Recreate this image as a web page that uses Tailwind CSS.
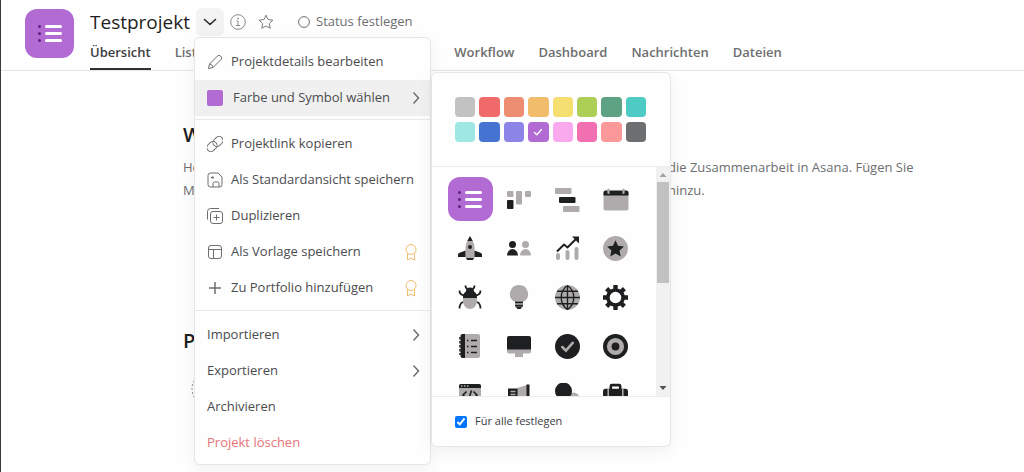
<!DOCTYPE html>
<html lang="de">

<head>
    <meta charset="utf-8" />
    <meta name="viewport" content="width=device-width, initial-scale=1.0">
    <title>Testprojekt</title>
    <script src="https://cdn.jsdelivr.net/npm/@tailwindcss/browser@4"></script>
</head>

<body class="relative min-h-screen overflow-hidden border-l border-[#3a3a3a] bg-[#fefefe] font-['Open_Sans',sans-serif] text-[#6d6e6f]">

    <!-- Header -->
    <header class="flex gap-4 border-b border-[#e6e6e6] pl-6">
        <div class="mt-[9px] flex size-[49px] shrink-0 items-center justify-center rounded-xl bg-[#b36bd4]">
            <svg class="size-6" viewBox="0 0 24 24">
                <g fill="#5c2380"><circle cx="1.5" cy="4.500" r="1.5" /><circle cx="1.5" cy="11.500" r="1.5" /><circle cx="1.5" cy="18.500" r="1.5" /></g>
                <path d="M8.500 4.500h14M8.500 11.500h14M8.500 18.500h14" stroke="#fff" stroke-width="3" stroke-linecap="round" />
            </svg>
        </div>
        <div class="min-w-0 flex-1">
            <div class="flex h-11 items-center">
                <h1 class="w-[106px] whitespace-nowrap text-[19px] font-medium text-[#1e1f21]">Testprojekt</h1>
                <button class="flex size-7 items-center justify-center rounded-md bg-[#f3f3f3]" aria-label="Projektaktionen">
                    <svg class="size-4" viewBox="0 0 16 16" fill="none" stroke="#2a2b2c" stroke-width="1.6" stroke-linecap="round" stroke-linejoin="round"><path d="M2.500 5.500 8 10.500l5.500-5" /></svg>
                </button>
                <button class="ml-1.5" aria-label="Projektdetails">
                    <svg class="size-4" viewBox="0 0 16 16" fill="none" stroke="#8a8b8c"><circle cx="8" cy="8" r="7.300" /><path d="M6.500 7H8v4.500M6 11.500h4" /><circle cx="8" cy="4.500" r=".5" fill="#6d6e6f" /></svg>
                </button>
                <button class="ml-3" aria-label="Favorit">
                    <svg class="size-4" viewBox="0 0 16 16" fill="none" stroke="#7a7b7c" stroke-linejoin="round"><path d="m8 1.200 2 4.400 4.900.6-3.600 3.300.9 4.800L8 12l-4.200 2.300.9-4.800L1.100 6.200l4.900-.6z" /></svg>
                </button>
                <button class="ml-6 flex items-center gap-1.5 whitespace-nowrap text-[13px]">
                    <svg class="size-3" viewBox="0 0 12 12" fill="none" stroke="#6d6e6f"><circle cx="6" cy="6" r="5.400" /></svg>
                    Status festlegen
                </button>
            </div>
            <nav class="flex h-[26px] gap-6 whitespace-nowrap text-[13px] leading-4 font-semibold">
                <a href="#" class="border-b-2 border-[#2f3032] text-[#3c3d3f]">Übersicht</a>
                <a href="#">Liste</a>
                <a href="#">Board</a>
                <a href="#">Zeitachse</a>
                <a href="#">Kalender</a>
                <a href="#">Workflow</a>
                <a href="#">Dashboard</a>
                <a href="#">Nachrichten</a>
                <a href="#">Dateien</a>
            </nav>
        </div>
    </header>

    <!-- Page content -->
    <main class="pt-[50px] pl-[182px]">
        <h2 class="text-xl leading-7 font-semibold text-[#1e1f21]">Wir</h2>
        <div class="mt-[7px] grid grid-cols-[485px_1fr] text-[13px] leading-[23px]">
            <span>Heißen Sie</span>
            <span>die Zusammenarbeit in Asana. Fügen Sie</span>
            <span>Material</span>
            <span>hinzu.</span>
        </div>
        <h2 class="mt-[125px] text-xl leading-7 font-semibold text-[#1e1f21]">Plan</h2>
        <svg class="mt-4 ml-2 size-9" viewBox="0 0 36 36" fill="none" stroke="#8a8b8c" stroke-dasharray="2 2"><circle cx="18" cy="18" r="17" /></svg>
    </main>

    <!-- Project actions menu -->
    <div class="absolute top-[37px] left-[193px] w-[237px] rounded-md border border-[#e6e6e6] bg-[#fefefe] text-[13px] text-[#4b4c4e] shadow-[0_4px_16px_rgba(0,0,0,0.06)]">
        <div class="pt-1.5 pb-[3px]">
            <button class="flex h-9 w-full items-center gap-2 px-3">
                <svg class="size-4" viewBox="0 0 16 16" fill="none" stroke="#6d6e6f" stroke-linejoin="round"><path d="m1.500 14.500 1-4.500 8-8a2 2 0 0 1 3 0l.5.500a2 2 0 0 1 0 3l-8 8z" /><path d="M2.500 10c2 .3 3.200 1.500 3.500 3.500" /></svg>
                Projektdetails bearbeiten
            </button>
            <button class="flex h-9 w-full items-center gap-2.5 bg-[#f0f0f0] px-3">
                <span class="size-4 rounded-xs bg-[#b36bd4]"></span>
                Farbe und Symbol wählen
                <svg class="-mr-1.5 ml-auto size-4" viewBox="0 0 16 16" fill="none" stroke="#6d6e6f" stroke-width="1.500"><path d="m5.500 2.500 5 5.500-5 5.500" /></svg>
            </button>
        </div>
        <div class="border-t border-[#e8e8e8] pt-1.5 pb-1">
            <button class="flex h-9 w-full items-center gap-2 px-3">
                <svg class="size-4" viewBox="0 0 16 16" fill="none" stroke="#6d6e6f"><rect x="-.5" y="6.500" width="11" height="8" rx="4" transform="rotate(-45 5 10.500)" /><rect x="5.500" y="1.500" width="11" height="8" rx="4" transform="rotate(-45 11 5.500)" /></svg>
                Projektlink kopieren
            </button>
            <button class="flex h-9 w-full items-center gap-2 px-3">
                <svg class="size-4" viewBox="0 0 16 16" fill="none" stroke="#6d6e6f"><path d="M3.500 1H11l4 4v7.500a2.500 2.500 0 0 1-2.500 2.500h-9A2.500 2.500 0 0 1 1 12.500v-9A2.500 2.500 0 0 1 3.500 1zM6 15v-3.500A1.500 1.500 0 0 1 7.500 10h3a1.500 1.500 0 0 1 1.500 1.500V15" /><path d="M4.500 5h2v1h-2z" fill="#6d6e6f" /></svg>
                <span class="whitespace-nowrap">Als Standardansicht speichern</span>
            </button>
            <button class="flex h-9 w-full items-center gap-2 px-3">
                <svg class="size-4" viewBox="0 0 16 16" fill="none" stroke="#6d6e6f"><rect x="3.500" y="3.500" width="12" height="12" rx="2.500" /><path d="M9.500 6.500v6M6.500 9.500h6M.5 11.500V3.500a3 3 0 0 1 3-3h8.500" /></svg>
                Duplizieren
            </button>
            <button class="flex h-9 w-full items-center gap-2 px-3">
                <svg class="size-4" viewBox="0 0 16 16" fill="none" stroke="#6d6e6f"><rect x="1.500" y="1.500" width="13" height="13" rx="2.500" /><path d="M1.500 5.500h13M6.500 5.500v9" /></svg>
                Als Vorlage speichern
                <svg class="-mr-px ml-auto h-[17px] w-4" viewBox="0 0 16 17" fill="none" stroke="#f1bd6c"><circle cx="8" cy="5.500" r="5" /><path d="M4.500 9.500v6.500L8 14l3.500 2V9.500" /></svg>
            </button>
            <button class="flex h-9 w-full items-center gap-2 px-3">
                <svg class="size-4" viewBox="0 0 16 16" fill="none" stroke="#6d6e6f" stroke-width="1.500"><path d="M8 2v12M2 8h12" /></svg>
                Zu Portfolio hinzufügen
                <svg class="-mr-px ml-auto h-[17px] w-4" viewBox="0 0 16 17" fill="none" stroke="#f1bd6c"><circle cx="8" cy="5.500" r="5" /><path d="M4.500 9.500v6.500L8 14l3.500 2V9.500" /></svg>
            </button>
        </div>
        <div class="border-t border-[#e8e8e8] pt-1.5 pb-[3px]">
            <button class="flex h-9 w-full items-center px-3">
                Importieren
                <svg class="-mr-1.5 ml-auto size-4" viewBox="0 0 16 16" fill="none" stroke="#6d6e6f" stroke-width="1.500"><path d="m5.500 2.500 5 5.500-5 5.500" /></svg>
            </button>
            <button class="flex h-9 w-full items-center px-3">
                Exportieren
                <svg class="-mr-1.5 ml-auto size-4" viewBox="0 0 16 16" fill="none" stroke="#6d6e6f" stroke-width="1.500"><path d="m5.500 2.500 5 5.500-5 5.500" /></svg>
            </button>
            <button class="flex h-9 w-full items-center px-3">Archivieren</button>
            <button class="flex h-9 w-full items-center px-3 text-[#e8747a]">Projekt löschen</button>
        </div>
    </div>

    <!-- Colour and icon picker -->
    <div class="absolute top-[72px] left-[430px] w-[240px] rounded-md border border-[#e6e6e6] bg-[#fefefe] shadow-[0_4px_16px_rgba(0,0,0,0.06)]">
        <div class="grid grid-cols-8 gap-x-1 gap-y-[5px] py-6 pr-6 pl-[23px]">
            <button aria-label="Grau" class="h-5 rounded bg-[#c3c2c2]"></button>
            <button aria-label="Rot" class="h-5 rounded bg-[#f06a6a]"></button>
            <button aria-label="Orange" class="h-5 rounded bg-[#ec8d71]"></button>
            <button aria-label="Gelborange" class="h-5 rounded bg-[#f1bd6c]"></button>
            <button aria-label="Gelb" class="h-5 rounded bg-[#f5df70]"></button>
            <button aria-label="Gelbgrün" class="h-5 rounded bg-[#aecf55]"></button>
            <button aria-label="Grün" class="h-5 rounded bg-[#5da283]"></button>
            <button aria-label="Blaugrün" class="h-5 rounded bg-[#4ecbc4]"></button>
            <button aria-label="Aqua" class="h-5 rounded bg-[#9ee7e3]"></button>
            <button aria-label="Blau" class="h-5 rounded bg-[#4573d2]"></button>
            <button aria-label="Indigo" class="h-5 rounded bg-[#8d84e8]"></button>
            <button aria-label="Lila" class="flex h-5 items-center justify-center rounded bg-[#b36bd4]">
                <svg class="size-2.5" viewBox="0 0 10 10" fill="none" stroke="#fff" stroke-width="1.300" stroke-linecap="round" stroke-linejoin="round"><path d="M1.500 5.500 3.800 7.800 8.500 2.500" /></svg>
            </button>
            <button aria-label="Magenta" class="h-5 rounded bg-[#f9aaef]"></button>
            <button aria-label="Pink" class="h-5 rounded bg-[#f26fb2]"></button>
            <button aria-label="Hellrot" class="h-5 rounded bg-[#fc979a]"></button>
            <button aria-label="Dunkelgrau" class="h-5 rounded bg-[#6d6e6f]"></button>
        </div>

        <div class="flex h-[231px] overflow-hidden border-y border-[#ececec]">
            <div class="grid flex-1 auto-rows-[44px] grid-cols-4 gap-x-1 gap-y-[5px] pt-2.5 pr-[18px] pl-4 *:flex *:items-center *:justify-center">
                <button class="rounded-xl bg-[#b36bd4]" aria-label="Liste">
                    <svg class="size-6" viewBox="0 0 24 24">
                        <g fill="#5c2380"><circle cx="1.500" cy="5.500" r="1.500" /><circle cx="1.500" cy="12.500" r="1.500" /><circle cx="1.500" cy="19.500" r="1.500" /></g>
                        <path d="M8.500 5.500h14M8.500 12.500h14M8.500 19.500h14" stroke="#fff" stroke-width="3" stroke-linecap="round" />
                    </svg>
                </button>
                <button aria-label="Board">
                    <svg class="size-6" viewBox="0 0 24 24" fill="#afabac"><rect y="4" width="6.500" height="6" rx="1" /><rect y="13" width="6.500" height="9" rx="1" fill="#1e1f21" /><rect x="9" y="4" width="6" height="13.500" rx="1" /><rect x="18" y="4" width="6" height="6" rx="1" /></svg>
                </button>
                <button aria-label="Zeitachse">
                    <svg class="size-[25px]" viewBox="0 0 25 25" fill="#afabac"><rect y="1" width="16.500" height="6" rx="1" /><rect x="4" y="10" width="16.500" height="6" rx="1" fill="#1e1f21" /><rect x="8" y="19" width="16.500" height="6" rx="1" /></svg>
                </button>
                <button aria-label="Kalender">
                    <svg class="size-[26px]" viewBox="0 0 26 26"><rect x=".5" y="5" width="25" height="19.500" rx="2" fill="#afabac" /><path d="M.5 9.500V6.500a2 2 0 0 1 2-2h21a2 2 0 0 1 2 2v3z" fill="#1e1f21" /><path d="M5.500 3.500v3.500M20.500 3.500v3.500" stroke="#afabac" stroke-width="2.200" stroke-linecap="round" /></svg>
                </button>

                <button aria-label="Rakete">
                    <svg class="size-6" viewBox="0 0 24 24" fill="#1e1f21"><path d="M7.500 22V11c0-3 1.500-5.500 2.500-7h4c1 1.500 2.500 4 2.500 7v11z" fill="#afabac" /><path d="M9.300 5Q11 1.500 12 0q1 1.500 2.700 5zM7.500 14.500v6.500H0v-2.500q0-1 1-1.500zM16.500 14.500v6.500H24v-2.500q0-1-1-1.500zM8 22h8l-1 2H9z" /><circle cx="12" cy="11" r="2" /></svg>
                </button>
                <button aria-label="Personen">
                    <svg class="size-6" viewBox="0 0 24 24"><g fill="#1e1f21"><circle cx="5.500" cy="8.500" r="3.500" /><path d="M0 19.500a5.500 6.500 0 0 1 11 0z" /></g><g fill="#afabac"><circle cx="18.500" cy="8.500" r="3.500" /><path d="M13 19.500a5.500 6.500 0 0 1 11 0z" /></g></svg>
                </button>
                <button aria-label="Diagramm">
                    <svg class="size-6" viewBox="0 0 24 24" fill="none"><path d="M3 19v3M12.500 16v6M21.500 13v9" stroke="#afabac" stroke-width="4" stroke-linecap="round" /><path d="m2 15.500 7-7 3.500 3L22 2" stroke="#1e1f21" stroke-width="2" /><path d="M17 .5h7v7z" fill="#1e1f21" /></svg>
                </button>
                <button aria-label="Stern">
                    <svg class="size-[25px]" viewBox="0 0 24 24"><circle cx="12" cy="12" r="12" fill="#afabac" /><path d="m12 4 2.400 5.300 5.700.7-4.200 3.900 1.100 5.700-5-2.900-5 2.900 1.100-5.700L3.900 10l5.700-.7z" fill="#1e1f21" /></svg>
                </button>

                <button aria-label="Käfer">
                    <svg class="size-6" viewBox="0 0 24 24"><path d="M5 13h14v3.500a7 7.500 0 0 1-14 0z" fill="#afabac" /><path d="M5 13c0-3 .5-5 3-6.500C8 4 9.500 2.500 12 2.500s4 1.500 4 4c2.500 1.500 3 3.500 3 6.500z" fill="#1e1f21" /><path d="M7.500.5c0 2 .7 3 2 3.500M16.500.5c0 2-.7 3-2 3.500M1.500 5.500C1.500 8.500 3.500 10 6 10.500M22.500 5.500c0 3-2 4.500-4.500 5M1.500 23.500c0-3 1-5.500 3.500-6.500M22.500 23.500c0-3-1-5.500-3.500-6.500" fill="none" stroke="#1e1f21" stroke-width="1.800" /></svg>
                </button>
                <button aria-label="Glühbirne">
                    <svg class="size-6" viewBox="0 0 24 24"><path d="M12 0a9 9 0 0 1 5 16.500H7A9 9 0 0 1 12 0z" fill="#afabac" /><path d="M8 17.500h8M8 20.500h8" stroke="#1e1f21" stroke-width="2" /><path d="M8.500 21.500h7l-2 2.500h-3z" fill="#1e1f21" /></svg>
                </button>
                <button aria-label="Globus">
                    <svg class="size-[25px]" viewBox="0 0 24 24" fill="none"><circle cx="12" cy="12" r="12" fill="#afabac" /><path d="M12 0v24M0 12h24M2 6h20M2 18h20M12 .5C4 6 4 18 12 23.500M12 .5c8 5.500 8 17.500 0 23" stroke="#1e1f21" stroke-width="1.300" /></svg>
                </button>
                <button aria-label="Zahnrad">
                    <svg class="size-[25px]" viewBox="0 0 24 24" fill="none" stroke="#1e1f21"><circle cx="12" cy="12" r="7.300" stroke-width="3.400" /><path d="M12 0v4M12 20v4M0 12h4M20 12h4M3.500 3.500l3 3M17.500 17.500l3 3M3.500 20.500l3-3M17.500 6.500l3-3" stroke-width="4.200" /></svg>
                </button>

                <button aria-label="Notizbuch">
                    <svg class="size-6" viewBox="0 0 24 24"><path d="M6 0h14a2 2 0 0 1 2 2v20a2 2 0 0 1-2 2H6z" fill="#afabac" /><path d="M7 0v24H4.500A2 2 0 0 1 2.500 22V2a2 2 0 0 1 2-2z" fill="#1e1f21" /><path d="M2 3v18" stroke="#1e1f21" stroke-width="1.500" stroke-dasharray="2.500 1.500" /><path d="M9 6.500h1.500M13 6.500h6M9 12.500h1.500M13 12.500h6M9 18.500h1.500M13 18.500h6" stroke="#1e1f21" stroke-width="1.300" /></svg>
                </button>
                <button aria-label="Bildschirm">
                    <svg class="size-6" viewBox="0 0 24 24"><path d="M0 15h24v2.500a2 2 0 0 1-2 2h-6V23H8v-3.500H2a2 2 0 0 1-2-2z" fill="#afabac" /><path d="M0 15.500V4a2 2 0 0 1 2-2h20a2 2 0 0 1 2 2v11.500z" fill="#1e1f21" /></svg>
                </button>
                <button aria-label="Häkchen">
                    <svg class="size-[25px]" viewBox="0 0 24 24"><circle cx="12" cy="12" r="12" fill="#1e1f21" /><path d="m7 12.500 3.500 3.500L17 8.500" fill="none" stroke="#afabac" stroke-width="2.500" stroke-linecap="round" /></svg>
                </button>
                <button aria-label="Zielscheibe">
                    <svg class="size-[25px]" viewBox="0 0 24 24"><circle cx="12" cy="12" r="12" fill="#1e1f21" /><circle cx="12" cy="12" r="6" fill="none" stroke="#afabac" stroke-width="4.500" /></svg>
                </button>

                <button aria-label="Code">
                    <svg class="size-6" viewBox="0 0 24 24" fill="none"><rect x="1" y="1" width="22" height="20" rx="2" fill="#afabac" /><path d="M1 5V3a2 2 0 0 1 2-2h18a2 2 0 0 1 2 2v2z" fill="#1e1f21" /><path d="M3 3h1.500M6 3h1.500M9 3h1.500" stroke="#afabac" stroke-width="1.500" /><path d="m8.500 8.500-3.500 3.500 3.500 3.500M15.500 8.500 19 12l-3.500 3.500M13.500 7.500l-3 9" stroke="#1e1f21" stroke-width="1.600" /></svg>
                </button>
                <button aria-label="Megafon">
                    <svg class="size-6" viewBox="0 0 24 24"><path d="m10 5 10-3v17l-10-4z" fill="#afabac" /><path d="M1 5.500h9.500v10H1zM19.500 1.500h3v18h-3zM4 15h5v7H5z" fill="#1e1f21" /><path d="M3.500 8.500h5M3.500 11.500h5" stroke="#afabac" stroke-width="1.300" /></svg>
                </button>
                <button aria-label="Chat">
                    <svg class="size-6" viewBox="0 0 24 24"><circle cx="18.500" cy="15.500" r="6" fill="#afabac" /><circle cx="8.500" cy="8" r="8.500" fill="#1e1f21" /></svg>
                </button>
                <button aria-label="Koffer">
                    <svg class="size-[25px]" viewBox="0 0 24 24"><path d="M7.500 6V3a1 1 0 0 1 1-1h7a1 1 0 0 1 1 1v3" fill="none" stroke="#1e1f21" stroke-width="2.500" /><rect y="5.500" width="24" height="16" rx="2.500" fill="#1e1f21" /><path d="M5 5.500v16M19 5.500v16" stroke="#afabac" stroke-width="1.500" /></svg>
                </button>
            </div>
            <div class="flex w-3.5 flex-col items-center justify-between bg-[#f1f1f1]">
                <svg class="h-[15px] w-2" viewBox="0 0 8 15"><path d="m4 6 3.500 4h-7z" fill="#a3a3a3" /></svg>
                <div class="mb-auto h-[101px] w-3 bg-[#c1c1c1]"></div>
                <svg class="h-4 w-2" viewBox="0 0 8 16"><path d="m4 10 3.500-4h-7z" fill="#505050" /></svg>
            </div>
        </div>

        <label class="flex h-[49px] items-center gap-2 pl-[23px] text-[11px] text-[#3c3d3f]">
            <input type="checkbox" checked class="size-3 accent-[#0075ff]">
            Für alle festlegen
        </label>
    </div>

</body>

</html>
